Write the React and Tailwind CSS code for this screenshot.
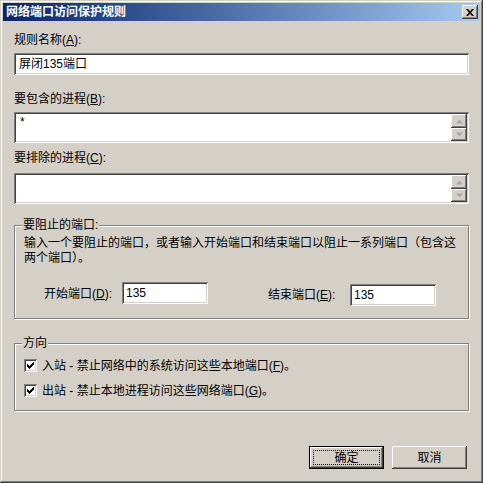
import React from 'react';

const font = 'font-["Liberation_Sans","Noto_Sans_CJK_SC",sans-serif]';
const sunken = 'bg-white shadow-[inset_1px_1px_#808080,inset_-1px_-1px_#fff,inset_2px_2px_#404040,inset_-2px_-2px_#d4d0c8]';
const raised = 'bg-[#d4d0c8] shadow-[inset_-1px_-1px_#404040,inset_1px_1px_#fff,inset_-2px_-2px_#808080,inset_2px_2px_#d4d0c8]';
const etched = 'border border-[#808080] shadow-[inset_1px_1px_#fff,1px_1px_#fff]';

const Acc = ({ label, k }) => (
  <span>
    {label}(<span className="underline underline-offset-1">{k}</span>):
  </span>
);

const Arrow = ({ up }) => (
  <svg width="7" height="5" viewBox="0 0 7 5">
    <polygon points={up ? '3.5,0.5 7,4.5 0,4.5' : '0,0.5 7,0.5 3.5,4.5'} fill="#a8a8a8" />
  </svg>
);

const ScrollBox = ({ text }) => (
  <div className={`${sunken} h-[31px] flex p-[2px]`}>
    <div className="flex-1 px-[4px] pt-[1px] leading-[14px]">{text}</div>
    <div className="w-[16px] flex flex-col">
      <div className={`${raised} h-[14px] flex items-center justify-center`}>
        <Arrow up />
      </div>
      <div className={`${raised} h-[13px] flex items-center justify-center`}>
        <Arrow />
      </div>
    </div>
  </div>
);

const GroupLabel = ({ children }) => (
  <span className="absolute -top-[8px] left-[7px] bg-[#d4d0c8] px-[1px] leading-[14px]">{children}</span>
);

const Check = ({ children }) => (
  <div className="flex items-center h-[13px]">
    <div className={`${sunken} w-[13px] h-[13px] flex items-center justify-center`}>
      <svg width="7" height="7" viewBox="0 0 7 7">
        <path d="M0 2h1v1h1v1h1V3h1V2h1V1h1V0h1v3h-1v1h-1v1h-1v1h-1v1h-1V6h-1V5H0z" fill="#000" />
      </svg>
    </div>
    <span className="ml-[5px] leading-[14px]">{children}</span>
  </div>
);

export default function App() {
  return (
    <div className={`${font} text-[12px] text-black w-[483px] h-[483px] bg-[#d4d0c8] p-[3px] flex flex-col shadow-[inset_-1px_-1px_#404040,inset_1px_1px_#d4d0c8,inset_-2px_-2px_#808080,inset_2px_2px_#fff]`}>
      {/* Title bar */}
      <div className="h-[18px] flex items-center bg-gradient-to-r from-[#0a246a] to-[#a6caf0] pl-[3px] pr-[2px]">
        <span className="text-white font-bold leading-[14px] flex-1">网络端口访问保护规则</span>
        <div className={`${raised} w-[16px] h-[14px] flex items-center justify-center`}>
          <svg width="8" height="7" viewBox="0 0 8 7">
            <path d="M0 0h2l2 2.2L6 0h2L5 3.5 8 7H6L4 4.8 2 7H0l3-3.5z" fill="#000" />
          </svg>
        </div>
      </div>

      <div className="px-[11px] flex flex-col">
        <div className="mt-[12px] leading-[14px]">
          <Acc label="规则名称" k="A" />
        </div>
        <div className={`${sunken} mt-[6px] h-[22px] flex items-center px-[5px]`}>屏闭135端口</div>

        <div className="mt-[17px] leading-[14px]">
          <Acc label="要包含的进程" k="B" />
        </div>
        <div className="mt-[6px]">
          <ScrollBox text="*" />
        </div>

        <div className="mt-[8px] leading-[14px]">
          <Acc label="要排除的进程" k="C" />
        </div>
        <div className="mt-[8px]">
          <ScrollBox text="" />
        </div>

        {/* Ports group */}
        <div className={`${etched} relative mt-[21px] h-[94px] pt-[10px] pl-[9px]`}>
          <GroupLabel>要阻止的端口:</GroupLabel>
          <div className="leading-[15px]">
            输入一个要阻止的端口，或者输入开始端口和结束端口以阻止一系列端口（包含这
            <br />
            两个端口）。
          </div>
          <div className="flex items-start mt-[16px] ml-[20px]">
            <div className="w-[78px] h-[22px] flex items-center mt-[1px]">
              <Acc label="开始端口" k="D" />
            </div>
            <div className={`${sunken} w-[86px] h-[22px] flex items-center px-[4px]`}>135</div>
            <div className="w-[82px] h-[22px] flex items-center ml-[60px] mt-[2px]">
              <Acc label="结束端口" k="E" />
            </div>
            <div className={`${sunken} w-[86px] h-[22px] flex items-center px-[4px] mt-[2px]`}>135</div>
          </div>
        </div>

        {/* Direction group */}
        <div className={`${etched} relative mt-[24px] h-[68px] pt-[15px] pl-[9px] flex flex-col gap-[12px]`}>
          <GroupLabel>方向</GroupLabel>
          <Check>
            入站 - 禁止网络中的系统访问这些本地端口(<span className="underline underline-offset-1">F</span>)。
          </Check>
          <Check>
            出站 - 禁止本地进程访问这些网络端口(<span className="underline underline-offset-1">G</span>)。
          </Check>
        </div>

        <div className="mt-[35px] flex justify-end gap-[8px] pr-[2px]">
          <div className="w-[75px] h-[23px] border border-black bg-[#d4d0c8] shadow-[inset_-1px_-1px_#404040,inset_1px_1px_#fff,inset_-2px_-2px_#808080] p-[3px]">
            <div className="w-full h-full border border-dotted border-black flex items-center justify-center leading-[14px]">确定</div>
          </div>
          <div className={`${raised} w-[75px] h-[23px] flex items-center justify-center leading-[14px]`}>取消</div>
        </div>
      </div>
    </div>
  );
}
